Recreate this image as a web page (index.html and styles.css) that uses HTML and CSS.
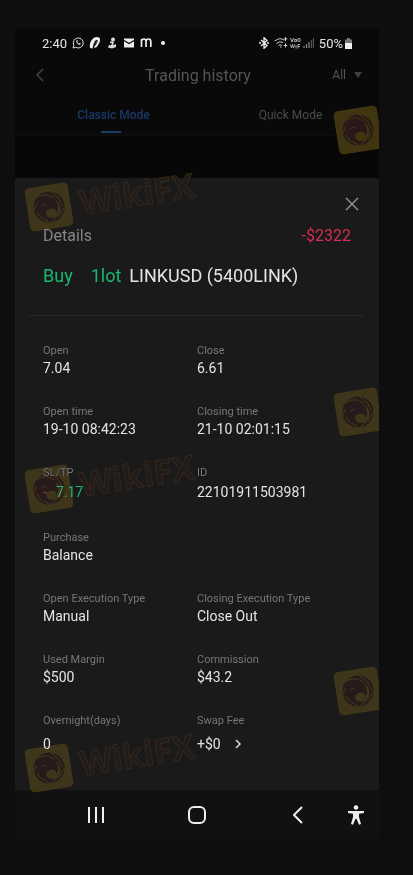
FILE: index.html
```
<!DOCTYPE html>
<html lang="en">
<head>
<meta charset="utf-8">
<meta name="viewport" content="width=device-width, initial-scale=1">
<title>Trading history</title>
<link rel="stylesheet" href="styles.css">
</head>
<body>
<svg class="defs" aria-hidden="true">
  <symbol id="eagle" viewBox="0 0 44 44">
    <rect width="44" height="44" rx="5" fill="#3f3510"/>
    <circle cx="22" cy="22" r="15.5" fill="#281819"/>
    <path d="M22 33C17 31 16 27 19 25L23 24C26 23 29 25 29 28C32 24 31 18 28 15C32 17 34 21 33 27C31 32 27 34 22 33Z" fill="#3f3510"/>
    <path d="M9 21C13 14 20 12 26 16C31 20 31 26 28 29C29 25 26 23 22 24C17 25 17 30 21 34C15 32 12 27 14 23C12 23 10 23 9 21Z" fill="#281819"/>
    <path d="M11 11Q16 8 23 10L29 14M25 6L33 15M33 15L36 24M37 25L30 33M30 32L22 37M21 38L14 32M13 32L9 25M6 24L10 17" fill="none" stroke="#3f3510" stroke-width="1.200"/>
    <path d="M14 20Q17 18 20 19" fill="none" stroke="#3f3510"/>
  </symbol>
</svg>
<main class="phone">
  <div class="status">
    <div class="status-left">
      <span>2:40</span>
      <svg width="12" height="12" viewBox="0 0 12 12" fill="none" stroke="#ddd"><path d="M1 11l.8-2.7A5 5 0 1 1 3.7 10.300z"/><path d="M4.300 3.400c-.8 2 2.200 4.900 4.300 4.200l.2-1-1.300-.7-.7.6c-.7-.3-1.200-.9-1.500-1.500l.5-.7-.6-1.200z" fill="#ddd" stroke="none"/></svg>
      <svg width="12" height="12" viewBox="0 0 12 12"><path fill-rule="evenodd" d="M1 11C0 6 3 0 8 0C12 0 12 4 9 8C8 10 6 12 5 10L7 7.500C9 5 9 3 8 3C5 3 4.500 8 3.500 11.500ZM6.300 6.500L7.500 4L7.300 6Z" fill="#eee"/></svg>
      <svg width="12" height="12" viewBox="0 0 12 12" fill="#ddd"><circle cx="7" cy="2.500" r="2"/><path d="M4 4.500h4l-1 4 3-1.500v3L6 11.500 2 10.500 3 8l2 .5 1-2.500H4z"/></svg>
      <svg width="12" height="12" viewBox="0 0 12 12"><path d="M1 1.500h10v9H1z" fill="#eee"/><path d="M1 3.500l5 3 5-3" stroke="#090909" stroke-width="1.300" fill="none"/></svg>
      <svg width="12" height="12" viewBox="0 0 12 12" fill="none" stroke="#eee" stroke-width="1.700"><path d="M1.500 10V2M1.500 4.500Q1.500 2 4 2Q6 2 6 4.500V10M6 4.500Q6 2 8.500 2Q10.800 2 10.800 4.500V10"/></svg>
      <i class="dot"></i>
    </div>
    <div class="status-right">
      <svg width="10" height="12" viewBox="0 0 10 12" fill="none" stroke="#eee" stroke-width="1.300"><path d="M2 3l6 5.500L5 11.300V.7L8 3.500 2 9M0 6h2M8 6h2"/></svg>
      <svg class="wifi" width="14" height="12" viewBox="0 0 14 12" fill="none" stroke="#ccc"><path d="M.7 4Q6 0 10 3M2.500 6.500Q6 3.500 9 5.500M4.500 8.500Q6 7 8 8.500M11.500 0v4M9.700 2h3.600M11.500 6.500v4M9.700 8.500h3.600M6 10h1.500"/></svg>
      <svg width="11" height="12" viewBox="0 0 11 12" fill="none" stroke="#aaa"><path d="M.5 1L2 5 3.500 1M4.500 2.500h2v2h-2zM8.500 1Q7 3 8.500 5M9.500 1Q11 3 9.500 5M.5 7.500l1 3.500 1-3.500 1 3.500 1-3.500M6 8v3.500M8 11.500V7.500h2M8 9.500h2"/></svg>
      <svg width="11" height="12" viewBox="0 0 11 12" stroke="#888" stroke-width="1.200"><path d="M1 9v2M3.500 7v4M6 5v6"/><path d="M8.500 3v8M10.500 1v10" stroke="#555"/></svg>
      <span class="charge">50%</span>
      <svg width="7" height="11" viewBox="0 0 7 11"><path d="M2 0h3v1.500h2V5H0V1.500h2z" fill="#777"/><path d="M0 5h7v6H0z" fill="#eee"/></svg>
    </div>
  </div>
  <header class="header">
    <button class="back" aria-label="Back"><svg width="8" height="14" viewBox="0 0 8 14"><path d="M7 1L1 7l6 6" fill="none" stroke="#444" stroke-width="1.500"/></svg></button>
    <h1>Trading history</h1>
    <button class="filter">All <svg width="8" height="6" viewBox="0 0 8 6"><path d="M0 0h8L4 6z" fill="#404040"/></svg></button>
  </header>
  <nav class="tabs">
    <a class="tab active" href="#classic">Classic Mode</a>
    <a class="tab" href="#quick">Quick Mode</a>
  </nav>
  <div class="backdrop"></div>
  <section class="sheet">
    <button class="close" aria-label="Close"><svg width="14" height="14" viewBox="0 0 14 14"><path d="M1 1l12 12M13 1L1 13" stroke="#999" stroke-width="1.300"/></svg></button>
    <div class="summary"><h2>Details</h2><span class="loss">-$2322</span></div>
    <p class="trade"><span class="green buy">Buy</span><span class="green lot">1lot</span><span>LINKUSD (5400LINK)</span></p>
    <hr>
    <dl class="facts">
      <div><dt>Open</dt><dd>7.04</dd></div>
      <div><dt>Close</dt><dd>6.61</dd></div>
      <div><dt>Open time</dt><dd>19-10 08:42:23</dd></div>
      <div><dt>Closing time</dt><dd>21-10 02:01:15</dd></div>
      <div class="tall"><dt>SL/TP</dt><dd class="limits"><span class="stop">-</span><span class="green">7.17</span></dd></div>
      <div class="tall"><dt>ID</dt><dd>22101911503981</dd></div>
      <div class="full"><dt>Purchase</dt><dd>Balance</dd></div>
      <div><dt>Open Execution Type</dt><dd>Manual</dd></div>
      <div><dt>Closing Execution Type</dt><dd>Close Out</dd></div>
      <div><dt>Used Margin</dt><dd>$500</dd></div>
      <div><dt>Commission</dt><dd>$43.2</dd></div>
      <div class="tall fees"><dt>Overnight(days)</dt><dd>0</dd></div>
      <div class="tall fees"><dt>Swap Fee</dt><dd class="swap">+$0 <svg width="6" height="10" viewBox="0 0 6 10"><path d="M1 1l4 4-4 4" fill="none" stroke="#ddd" stroke-width="1.500"/></svg></dd></div>
    </dl>
  </section>
  <nav class="system">
    <button aria-label="Recent apps"><svg width="18" height="18" viewBox="0 0 18 18"><path d="M2 1v16M9 1v16M16 1v16" stroke="#eee" stroke-width="2"/></svg></button>
    <button aria-label="Home"><svg width="18" height="18" viewBox="0 0 18 18"><rect x="1" y="1" width="16" height="16" rx="5" fill="none" stroke="#eee" stroke-width="2"/></svg></button>
    <button aria-label="Previous"><svg width="10" height="18" viewBox="0 0 10 18"><path d="M9 1L1 9l8 8" fill="none" stroke="#eee" stroke-width="2"/></svg></button>
    <button aria-label="Accessibility"><svg width="16" height="20" viewBox="0 0 16 20" fill="#eee"><circle cx="8" cy="2.500" r="2.300"/><path d="M0 6h16v2l-5 .8V12l2 7-2 .7L8.600 14H7.400L5 19.700 3 19l2-7V8.800L0 8z"/></svg></button>
  </nav>
  <div class="marks" aria-hidden="true">
    <div class="mark first"><svg><use href="#eagle"/></svg><span>WikiFX</span></div>
    <div class="mark second"><svg><use href="#eagle"/></svg><span>WikiFX</span></div>
    <div class="mark third"><svg><use href="#eagle"/></svg><span>WikiFX</span></div>
    <div class="mark edge edge-first"><svg><use href="#eagle"/></svg></div>
    <div class="mark edge edge-second"><svg><use href="#eagle"/></svg></div>
    <div class="mark edge edge-third"><svg><use href="#eagle"/></svg></div>
  </div>
</main>
</body>
</html>
```
FILE: styles.css
```
* { box-sizing: border-box; margin: 0; padding: 0; }
body {
  min-height: 100vh;
  padding: 28px 34px 35px 15px;
  background: #0e0e0e;
  color: #e4e4e4;
  font-family: Roboto, "Liberation Sans", sans-serif;
  font-size: 14px;
}
button { border: 0; background: none; color: inherit; font: inherit; display: flex; align-items: center; justify-content: center; }
svg { display: block; }
.defs { position: absolute; width: 0; height: 0; }
.phone { position: relative; overflow: hidden; background: #090909; }

.status { display: flex; justify-content: space-between; align-items: center; height: 30px; padding: 0 27px; font-size: 13px; }
.status-left, .status-right { display: flex; align-items: center; }
.status-left { gap: 5px; }
.status-right { gap: 2px; }
.wifi { margin-left: 3px; }
.charge { margin-left: 3px; }
.dot { width: 4px; height: 4px; margin-left: 4px; border-radius: 50%; background: #eee; }

.header { display: grid; grid-template-columns: 60px 1fr 60px; align-items: center; height: 34px; padding: 0 17px 0 19px; color: #555; }
.header h1 { font-size: 16px; font-weight: 400; text-align: center; }
.back { justify-content: flex-start; width: 24px; height: 24px; padding-left: 2px; }
.filter { justify-content: flex-end; gap: 8px; font-size: 12px; }

.tabs { display: grid; grid-template-columns: 1fr 1fr; padding: 14px 0 0 10px; border-bottom: 2px solid #0c0c0c; }
.tab { position: relative; height: 28px; line-height: 18px; text-align: center; font-size: 12px; color: #4b4b4b; text-decoration: none; }
.tab.active { color: #1c3868; font-weight: 500; }
.tab.active::after { content: ""; position: absolute; left: 50%; bottom: 1px; width: 20px; height: 2px; margin-left: -13px; background: #193c6d; }
.backdrop { height: 42px; background: #070707; }

.sheet { padding: 14px 15px 35px 13px; background: #1a1a1a; }
.close { width: 24px; height: 24px; margin-left: auto; }
.summary { display: flex; justify-content: space-between; margin-top: 8px; padding: 0 13px 0 15px; font-size: 16px; line-height: 24px; }
.summary h2 { font-size: 16px; font-weight: 400; color: #858585; }
.loss { color: #d82d56; }
.trade { display: flex; margin: 14px 0 25px; padding-left: 15px; font-size: 18px; line-height: 28px; }
.buy { margin-right: 18px; }
.lot { margin-right: 8px; }
.green { color: #17b86f; }
hr { height: 1px; border: 0; background: #25262a; }
.facts { display: grid; grid-template-columns: 154fr 167fr; row-gap: 27px; padding: 27px 0 0 15px; }
.full { grid-column: 1 / -1; }
.facts dt { font-size: 11px; line-height: 16px; color: #777; }
.facts dd { line-height: 18px; }
.facts .tall dd { line-height: 22px; }
.facts .fees dd { margin-top: 4px; }
.limits, .swap { display: flex; align-items: center; }
.limits { gap: 9px; }
.stop { color: #834b29; }
.swap { gap: 14px; }

.system { display: grid; grid-template-columns: 71fr 132fr 70fr 46fr; height: 49px; padding-left: 45px; background: #111; }

.marks { position: absolute; inset: 0; pointer-events: none; mix-blend-mode: lighten; }
.mark { position: absolute; left: 12px; display: flex; align-items: center; gap: 9px; transform: rotate(-9deg); transform-origin: 22px 22px; }
.mark svg { width: 44px; height: 44px; }
.mark span { font: 700 34px/44px "Open Sans", sans-serif; color: #231b18; -webkit-text-stroke: 1px #33290f; }
.first { top: 157px; }
.second { top: 439px; }
.third { top: 718px; }
.edge { left: auto; right: -1px; }
.edge-first { top: 80px; }
.edge-second { top: 362px; }
.edge-third { top: 641px; }
```
